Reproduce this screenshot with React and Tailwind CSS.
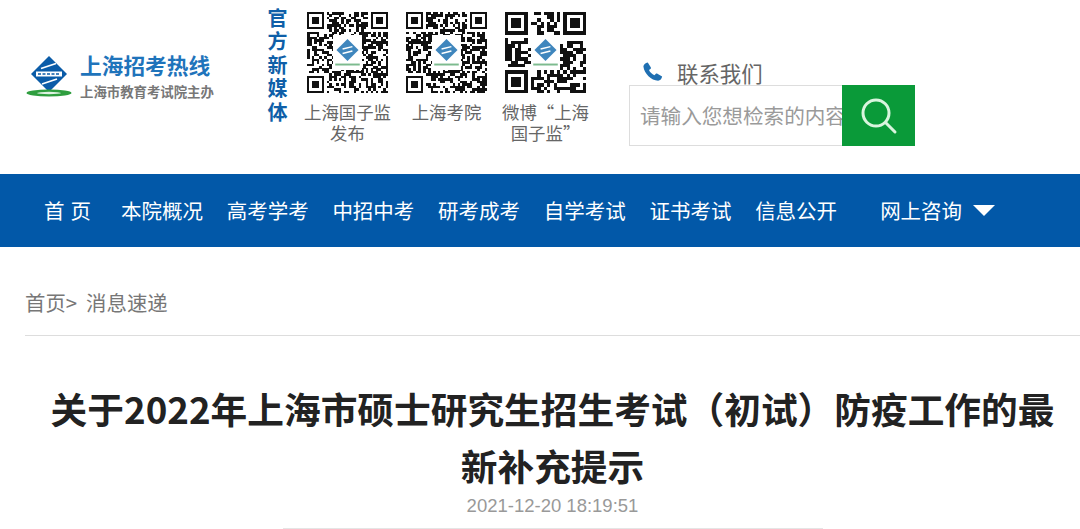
const font = { fontFamily: '"Noto Sans CJK SC", "Noto Sans", sans-serif' };

const navItems = ["本院概况", "高考学考", "中招中考", "研考成考", "自学考试", "证书考试", "信息公开"];

const media = [
  { seed: 17, size: 33, lines: ["上海国子监", "发布"] },
  { seed: 91, size: 33, lines: ["上海考院"] },
  { seed: 53, size: 25, lines: ["微博“上海", "国子监”"] },
];

function Logo({ className }) {
  return (
    <svg className={className} viewBox="0 0 46 42" fill="none">
      <path d="M23 0 L41 18 L23 36 L5 18 Z" fill="#0b5ca8" />
      <path d="M10 15.5 H36 V20.5 H10 Z" fill="#fff" />
      <path d="M12 18 H34" stroke="#0b5ca8" strokeWidth="1.6" strokeDasharray="3 1.5" />
      <path d="M15 12.5 L30 7.5 M16 28 L31 23" stroke="#fff" strokeWidth="1.8" />
      <ellipse cx="23" cy="37" rx="22.5" ry="3.4" fill="#2f9e3f" />
      <ellipse cx="23" cy="37" rx="12" ry="1.2" fill="#dff2e2" />
    </svg>
  );
}

// fake qr modules, only has to look right at this size
function Qr({ seed, size }) {
  let s = seed;
  const rand = () => {
    s = (s * 1103515245 + 12345) & 0x7fffffff;
    return (s >> 12) % 100;
  };
  const inFinder = (x, y) => (x < 8 && y < 8) || (x >= size - 8 && y < 8) || (x < 8 && y >= size - 8);
  const cells = [];
  for (let y = 0; y < size; y++) {
    for (let x = 0; x < size; x++) {
      const v = rand();
      if (!inFinder(x, y) && v < 56) cells.push(<rect key={x + "-" + y} x={x} y={y} width="1.02" height="1.02" />);
    }
  }
  const finder = (x, y) => (
    <g key={x + "_" + y}>
      <path fillRule="evenodd" d={`M${x} ${y}h7v7h-7z M${x + 1} ${y + 1}v5h5v-5z`} />
      <rect x={x + 2} y={y + 2} width="3" height="3" />
    </g>
  );
  const c = size / 2;
  const k = size / 33;
  return (
    <svg className="w-[81px] h-[81px] block" viewBox={`0 0 ${size} ${size}`} fill="#111" shapeRendering="crispEdges">
      {cells}
      {finder(0, 0)}
      {finder(size - 7, 0)}
      {finder(0, size - 7)}
      <rect x={c - 6 * k} y={c - 7 * k} width={12 * k} height={14 * k} fill="#fff" />
      <g shapeRendering="auto">
        <path d={`M${c} ${c - 5.5 * k} L${c + 4.5 * k} ${c - 1 * k} L${c} ${c + 3.5 * k} L${c - 4.5 * k} ${c - 1 * k} Z`} fill="#3f86bd" />
        <path d={`M${c - 2 * k} ${c - 1.4 * k} L${c + 2 * k} ${c - 2.4 * k} M${c - 2 * k} ${c + 0.4 * k} L${c + 2 * k} ${c - 0.6 * k}`} stroke="#fff" strokeWidth={0.6 * k} fill="none" />
        <rect x={c - 5 * k} y={c + 4.5 * k} width={10 * k} height={0.8 * k} fill="#7dbb8f" />
      </g>
    </svg>
  );
}

export default function App() {
  return (
    <div className="h-[529px] w-[1080px] overflow-hidden bg-white" style={font}>
      {/* Header */}
      <header className="h-[174px] flex items-start">
        <div className="w-[267px] shrink-0 pl-[26px] pt-[51px] flex items-start">
          <Logo className="w-[46px] h-[42px] mt-[5px]" />
          <div className="ml-[8px]">
            <div className="text-[21.7px] leading-[28px] font-bold text-[#1f74bb] whitespace-nowrap">上海招考热线</div>
            <div className="text-[13.4px] leading-[18px] mt-[3px] font-bold text-[#777] whitespace-nowrap">上海市教育考试院主办</div>
          </div>
        </div>

        <div className="w-[21px] shrink-0 mt-[6px] text-[20px] leading-[23.4px] font-bold text-[#0f5fa8] text-center">
          官<br />方<br />新<br />媒<br />体
        </div>

        <div className="flex gap-[18px] ml-[19px] mt-[12px] shrink-0">
          {media.map((m) => (
            <div key={m.seed} className="w-[81px] flex flex-col items-center">
              <Qr seed={m.seed} size={m.size} />
              <div className="mt-[8px] text-[17.4px] leading-[21px] text-[#666] text-center whitespace-nowrap">
                {m.lines.map((l) => (
                  <div key={l}>{l}</div>
                ))}
              </div>
            </div>
          ))}
        </div>

        <div className="ml-[43px] mt-[60px] w-[286px] shrink-0">
          <div className="flex items-start h-[25px] pl-[13px]">
            <svg className="w-[21px] h-[21px] mt-[1px]" viewBox="0 0 24 24" fill="#1f6fb2">
              <path d="M6.6 1.6 L10 7.2 C10.4 7.9 10.2 8.7 9.6 9.2 L8 10.4 C9.2 13 11.4 15.2 14.2 16.4 L15.6 14.9 C16.1 14.4 16.9 14.2 17.6 14.6 L23 17.8 C22.6 20.4 20.8 22.4 18.4 22.6 C10.6 22.4 2.6 14.6 1.6 6.4 C1.6 4 3.8 2 6.6 1.6 Z" />
            </svg>
            <span className="ml-[14px] text-[21.4px] leading-[25px] text-[#666]">联系我们</span>
          </div>
          <div className="h-[61px] flex border border-[#ddd] border-r-0">
            <div className="w-[212px] overflow-hidden pl-[11px] flex items-center text-[20.6px] text-[#9a9a9a] whitespace-nowrap">
              <span className="-ml-px">请输入您想检索的内容</span>
            </div>
            <div className="w-[73px] -my-px bg-[#0a9a39] flex items-center justify-center">
              <svg className="w-[38px] h-[38px]" viewBox="0 0 38 38" fill="none" stroke="#d9f5de" strokeWidth="3" strokeLinecap="round">
                <circle cx="16" cy="16" r="13" />
                <path d="M26 26 L35 35" />
              </svg>
            </div>
          </div>
        </div>
      </header>

      {/* Nav */}
      <nav className="h-[73px] bg-[#0258a8] flex items-center pl-[44px] text-[20.5px] text-white whitespace-nowrap">
        <a className="w-[47px] flex justify-between">
          <span>首</span>
          <span>页</span>
        </a>
        <div className="flex gap-[23.7px] ml-[30px]">
          {navItems.map((n) => (
            <a key={n} className="w-[82px]">{n}</a>
          ))}
        </div>
        <a className="ml-[43px]">网上咨询</a>
        <span className="ml-[11px] w-0 h-0 border-x-[11px] border-x-transparent border-t-[11px] border-t-white" />
      </nav>

      {/* Breadcrumb */}
      <div className="ml-[25px] h-[89px] border-b border-[#ddd] flex items-center pt-[22px] text-[20.4px] text-[#777] whitespace-nowrap">
        <span>首页&gt;</span>
        <span className="ml-[9px]">消息速递</span>
      </div>

      {/* Article head */}
      <div className="ml-[25px] pt-[44px] flex flex-col items-center">
        <h1 className="w-[1010px] text-center text-[36.7px] leading-[57px] font-bold text-[#222]">
          关于2022年上海市硕士研究生招生考试（初试）防疫工作的最新补充提示
        </h1>
        <div className="text-[18.5px] leading-[24px] text-[#999]" style={{ fontFamily: '"Liberation Sans", sans-serif' }}>2021-12-20 18:19:51</div>
        <div className="mt-[10px] w-[540px] h-px bg-[#e5e5e5]" />
      </div>
    </div>
  );
}
